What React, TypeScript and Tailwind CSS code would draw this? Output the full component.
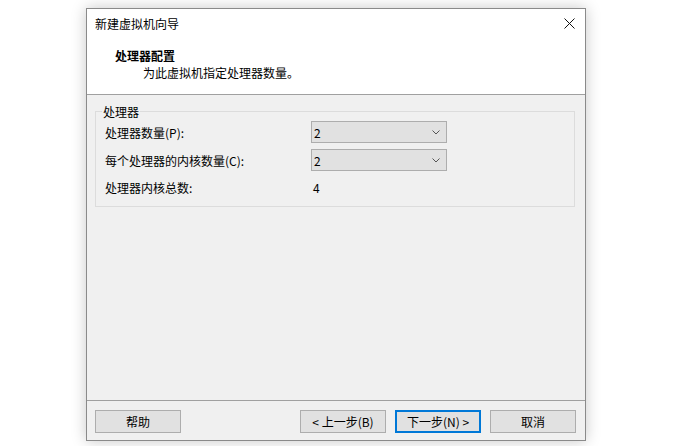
import React from "react";

const font = { fontFamily: '"Microsoft YaHei UI", "Noto Sans CJK SC", "Noto Sans", sans-serif' };

function Chevron() {
  return (
    <svg width="8" height="5" viewBox="0 0 8 5" fill="none">
      <path d="M0.5 0.5L4 4L7.5 0.5" stroke="#555" strokeWidth="1" />
    </svg>
  );
}

function Select({ value }: { value: string }) {
  return (
    <div className="w-[136px] h-[22px] border border-[#adadad] bg-[#e1e1e1] flex items-center justify-between pl-[2px] pr-[6px]">
      <span className="text-[12px] leading-[17px] text-black">{value}</span>
      <Chevron />
    </div>
  );
}

function Button({ label, primary }: { label: string; primary?: boolean }) {
  return (
    <button
      className={`w-[86px] h-[23px] bg-[#e1e1e1] flex items-center justify-center text-[12px] leading-[17px] text-black ${
        primary ? "border-2 border-[#0078d7]" : "border border-[#adadad]"
      }`}
    >
      {label}
    </button>
  );
}

export default function App() {
  return (
    <div className="w-[677px] h-[446px] bg-white overflow-hidden" style={font}>
      <div className="ml-[86px] mt-[8px] w-[500px] h-[433px] border border-[#8a8a8a] bg-[#f0f0f0] flex flex-col shadow-[0_0_14px_rgba(0,0,0,0.22)]">
        {/* 标题栏 */}
        <div className="h-[29px] bg-white flex items-center justify-between pl-[8px] pr-[10px]">
          <span className="text-[12px] leading-[17px] text-black">新建虚拟机向导</span>
          <svg width="11" height="11" viewBox="0 0 11 11" fill="none">
            <path d="M0.5 0.5L10.5 10.5M10.5 0.5L0.5 10.5" stroke="#111" strokeWidth="1" />
          </svg>
        </div>

        {/* 头部 */}
        <div className="h-[57px] bg-white pt-[9px] border-b border-[#a0a0a0]">
          <div className="pl-[28px] text-[12px] leading-[17px] font-bold text-black">处理器配置</div>
          <div className="pl-[56px] text-[12px] leading-[17px] text-black">为此虚拟机指定处理器数量。</div>
        </div>

        {/* 内容 */}
        <div className="flex-1 pt-[16px] pl-[8px] pr-[10px]">
          <div className="relative h-[96px] border border-[#dcdcdc] pt-[9px] pl-[9px]">
            <span className="absolute -top-[9px] left-[6px] px-[1px] bg-[#f0f0f0] text-[12px] leading-[17px] text-black">
              处理器
            </span>
            <div className="flex items-center">
              <span className="w-[206px] text-[12px] leading-[17px] text-black">处理器数量(P):</span>
              <Select value="2" />
            </div>
            <div className="flex items-center mt-[6px]">
              <span className="w-[206px] text-[12px] leading-[17px] text-black">每个处理器的内核数量(C):</span>
              <Select value="2" />
            </div>
            <div className="flex items-center mt-[8px]">
              <span className="w-[208px] text-[12px] leading-[17px] text-black">处理器内核总数:</span>
              <span className="text-[12px] leading-[17px] text-black">4</span>
            </div>
          </div>
        </div>

        {/* 底部按钮 */}
        <div className="h-[40px] border-t border-[#a0a0a0] flex items-start justify-between pt-[9px] pl-[8px] pr-[9px]">
          <Button label="帮助" />
          <div className="flex gap-[9px]">
            <Button label="< 上一步(B)" />
            <Button label="下一步(N) >" primary />
            <Button label="取消" />
          </div>
        </div>
      </div>
    </div>
  );
}
